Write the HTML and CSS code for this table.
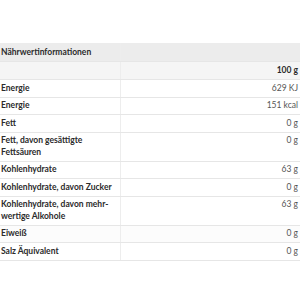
FILE: index.html
```html
<!DOCTYPE html>
<html lang="de">
<head>
<meta charset="utf-8">
<link rel="stylesheet" href="styles.css">
</head>
<body>
<div class="page">
<table class="nutri">
  <thead>
    <tr class="title"><th class="name">Nährwertinformationen</th><th class="val"></th></tr>
    <tr class="sub"><th class="name"></th><th class="val">100 g</th></tr>
  </thead>
  <tbody>
    <tr><td class="name">Energie</td><td class="val">629 KJ</td></tr>
    <tr><td class="name">Energie</td><td class="val">151 kcal</td></tr>
    <tr><td class="name">Fett</td><td class="val">0 g</td></tr>
    <tr><td class="name">Fett, davon gesättigte Fettsäuren</td><td class="val">0 g</td></tr>
    <tr><td class="name">Kohlenhydrate</td><td class="val">63 g</td></tr>
    <tr><td class="name">Kohlenhydrate, davon Zucker</td><td class="val">0 g</td></tr>
    <tr><td class="name">Kohlenhydrate, davon mehr­wertige Alkohole</td><td class="val">63 g</td></tr>
    <tr class="alt"><td class="name">Eiweiß</td><td class="val">0 g</td></tr>
    <tr><td class="name">Salz Äquivalent</td><td class="val">0 g</td></tr>
  </tbody>
</table>
</div>
</body>
</html>
```
FILE: styles.css
```css
html, body {
  margin: 0;
  padding: 0;
  background: #ffffff;
}
.page {
  padding-top: 43px;
  width: 300px;
}
.nutri {
  width: 300px;
  border-collapse: collapse;
  table-layout: fixed;
  font-family: Lato, "Liberation Sans", sans-serif;
  font-size: 8.5px;
  line-height: 11.5px;
  color: #2b2b2b;
}
.nutri th, .nutri td {
  padding: 2.5px 2px 2.5px 1px;
  border-bottom: 1px solid #e6e6e6;
  vertical-align: top;
}
.nutri .name {
  width: 117px;
  text-align: left;
  font-weight: 700;
  border-right: 1px solid #ededed;
}
.nutri .val {
  text-align: right;
  font-weight: 400;
  color: #555;
}
.nutri tr.title th {
  background: #ececec;
  height: 11px;
  line-height: 11px;
  padding-top: 4px;
  padding-bottom: 3px;
}
.nutri tr.sub th {
  background: #f5f5f5;
  height: 11px;
  line-height: 11px;
  padding-top: 3px;
  padding-bottom: 3px;
}
.nutri tr.sub th.val {
  font-weight: 700;
  color: #2b2b2b;
}
.nutri tr.alt td {
  background: #fcfcfc;
}
```
